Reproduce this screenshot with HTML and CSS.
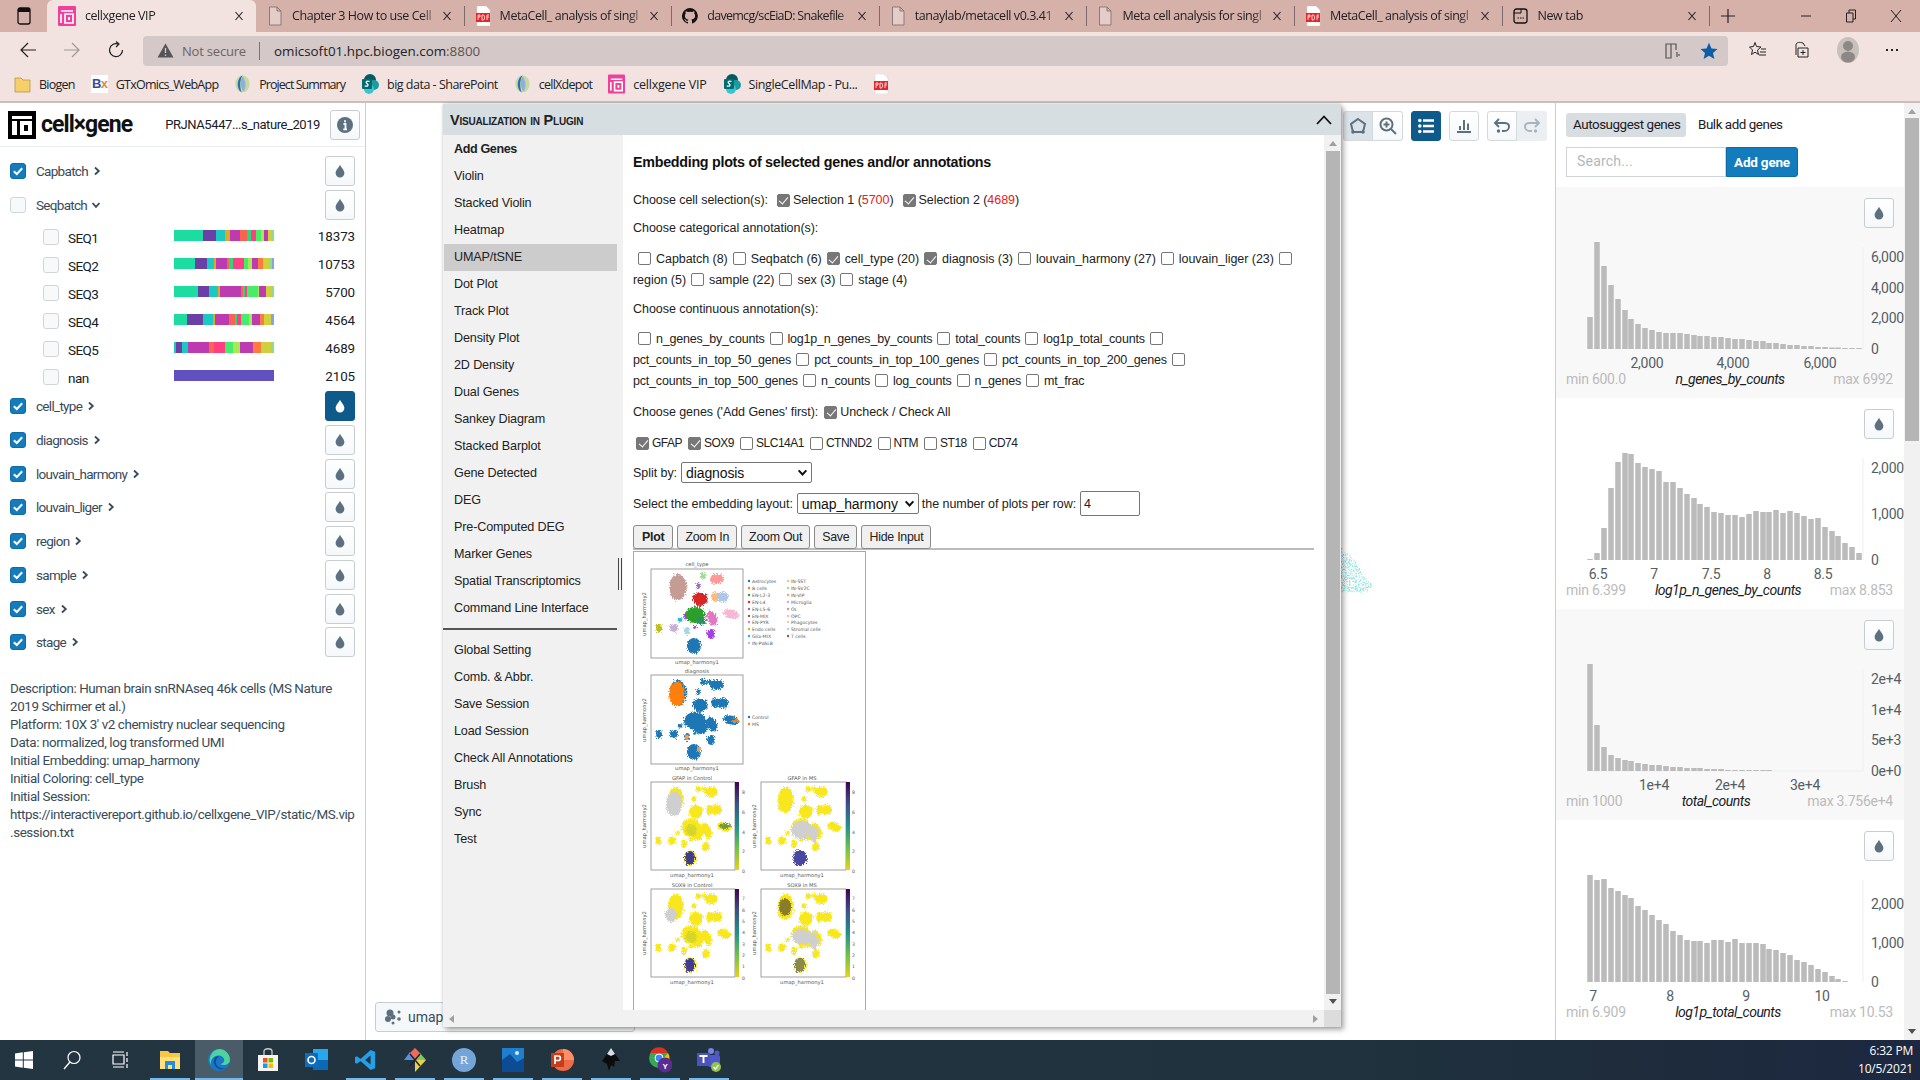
FILE: index.html
```html
<!DOCTYPE html>
<html lang="en">
<head>
<meta charset="utf-8">
<title>cellxgene VIP</title>
<link rel="stylesheet" href="styles.css">
</head>
<body>
<svg class="defs" width="0" height="0" aria-hidden="true">
  <defs>
    <symbol id="drop" viewBox="0 0 16 16"><path d="M8 .8C6.8 3.6 3 7 3 10.4A5 5 0 0 0 13 10.4C13 7 9.2 3.6 8 .8Z"/></symbol>
    <symbol id="chev" viewBox="0 0 10 10"><path d="M3 1.5 6.8 5 3 8.5" fill="none" stroke="currentColor" stroke-width="1.8"/></symbol>
    <symbol id="chevd" viewBox="0 0 10 10"><path d="M1.5 3 5 6.8 8.5 3" fill="none" stroke="currentColor" stroke-width="1.8"/></symbol>
    <symbol id="tick" viewBox="0 0 16 16"><path d="M3.8 8.2 6.8 11 12.2 5.2" fill="none" stroke="#fff" stroke-width="2"/></symbol>
    <symbol id="x" viewBox="0 0 10 10"><path d="M1.5 1 8.5 9M8.5 1 1.5 9" fill="none" stroke="#222" stroke-width="1.1"/></symbol>
    <symbol id="doc" viewBox="0 0 16 20"><path d="M2.5 1H10L14 5V19H2.5ZM10 1V5H14" fill="#e4cdc9" stroke="#8a7a78"/></symbol>
    <symbol id="pdf" viewBox="0 0 16 20"><path d="M2 0H11L15 4V20H2Z" fill="#fff" stroke="#ccc" stroke-width=".5"/><rect x="1" y="7" width="14" height="9" fill="#e8262a"/><path d="M3 14V9H5V11H3M7 14V9H8.500C10 10 10 13 8.500 14H7M12 14V9H14M12 11H14" fill="none" stroke="#fff" stroke-width=".8"/></symbol>
    <symbol id="vip" viewBox="0 0 18 20"><rect width="18" height="20" rx="1" fill="#f0409a"/><path d="M3 5H15M3 8V17M7 8H15V17H7Z" fill="none" stroke="#fff" stroke-width="1.700"/><rect x="10" y="11" width="2" height="3" fill="#fff"/></symbol>
    <symbol id="sp" viewBox="0 0 18 20"><circle cx="9" cy="6" r="6" fill="#045a60"/><circle cx="13" cy="11" r="5" fill="#1a9ba1"/><circle cx="8" cy="15" r="5" fill="#37c6d0"/><rect x="1" y="5" width="10" height="10" rx="1" fill="#036c70"/><path d="M8.500 7.500C6 6.500 4 8 6 9.500 8 11 7 12.800 3.800 12" fill="none" stroke="#fff" stroke-width="1.300"/></symbol>
    <symbol id="globe" viewBox="0 0 18 20"><ellipse cx="9" cy="10" rx="7.500" ry="9" fill="#c9d7a0"/><path d="M9 1C3 3 2 15 8 19 6 13 6 6 9 1Z" fill="#2a6fb5"/><path d="M9 2C6 7 7 14 10 18 13 14 13 6 9 2Z" fill="#8db0d8"/></symbol>
    <g id="um">
      <ellipse cx="27" cy="18" rx="8.500" ry="13"/><ellipse cx="24" cy="23" rx="5" ry="7"/>
      <ellipse cx="52" cy="7" rx="3" ry="3"/><ellipse cx="66" cy="10" rx="7" ry="5"/><ellipse cx="58" cy="7" rx="3" ry="2"/>
      <ellipse cx="47" cy="17" rx="2" ry="3"/>
      <ellipse cx="49" cy="30" rx="7.500" ry="7"/><ellipse cx="64" cy="28" rx="3.500" ry="5"/><ellipse cx="72" cy="28" rx="6" ry="5"/>
      <ellipse cx="44" cy="46" rx="11" ry="9"/><ellipse cx="50" cy="52" rx="7" ry="7"/><ellipse cx="61" cy="49" rx="5" ry="8" transform="rotate(-25 61 49)"/>
      <ellipse cx="80" cy="45" rx="8" ry="4.500" transform="rotate(15 80 45)"/>
      <ellipse cx="60" cy="65" rx="4" ry="5"/><ellipse cx="44" cy="58" rx="2" ry="2"/>
      <ellipse cx="43" cy="77" rx="7" ry="8"/><ellipse cx="36" cy="62" rx="3" ry="4"/>
      <ellipse cx="8" cy="59" rx="3" ry="4"/><ellipse cx="23" cy="59" rx="4" ry="4"/><ellipse cx="29" cy="51" rx="2.500" ry="2"/>
    </g>
    <filter id="soft" x="-15%" y="-15%" width="130%" height="130%"><feTurbulence type="fractalNoise" baseFrequency="1.1" numOctaves="2" seed="4" result="n"/><feDisplacementMap in="SourceGraphic" in2="n" scale="6" xChannelSelector="R" yChannelSelector="G"/><feGaussianBlur stdDeviation=".35"/></filter>
    <filter id="grain" x="-10%" y="-10%" width="120%" height="120%"><feTurbulence type="fractalNoise" baseFrequency=".9" numOctaves="2" seed="7" result="n"/><feDisplacementMap in="SourceGraphic" in2="n" scale="7" xChannelSelector="R" yChannelSelector="G"/></filter>
    <linearGradient id="vir" x1="0" y1="1" x2="0" y2="0"><stop offset="0" stop-color="#e8d21a"/><stop offset=".25" stop-color="#6cc34a"/><stop offset=".5" stop-color="#21908c"/><stop offset=".75" stop-color="#3b528b"/><stop offset="1" stop-color="#440154"/></linearGradient>
    <g id="genemap">
      <g transform="scale(.913 .99)"><use href="#um" fill="#f8e71c"/></g>
      <ellipse cx="39" cy="76" rx="5" ry="7" fill="#3f3a8c"/>
      <ellipse cx="40" cy="48" rx="6" ry="6" fill="#b8c93a" opacity=".55"/>
    </g>
  </defs>
</svg>

<div class="tabs">
  <div class="win-btn"><svg width="14" height="18" viewBox="0 0 14 18"><rect x="1" y="1" width="12" height="16" rx="2" fill="none" stroke="#111" stroke-width="1.300"/><rect x="1" y="1" width="12" height="4" fill="#111"/></svg></div>
  <div class="tab active"><svg class="fav" width="18" height="20"><use href="#vip"/></svg><span class="tab-t">cellxgene VIP</span><svg class="tab-x" width="10" height="10"><use href="#x"/></svg></div>
  <div class="tab"><svg class="fav" width="16" height="20"><use href="#doc"/></svg><span class="tab-t">Chapter 3 How to use Cell</span><svg class="tab-x" width="10" height="10"><use href="#x"/></svg></div>
  <div class="tab"><svg class="fav" width="16" height="20"><use href="#pdf"/></svg><span class="tab-t">MetaCell_ analysis of singl</span><svg class="tab-x" width="10" height="10"><use href="#x"/></svg></div>
  <div class="tab"><svg class="fav" width="16" height="18" viewBox="0 0 16 16"><path fill="#111" d="M8 0a8 8 0 0 0-2.500 15.600c.4.100.5-.2.500-.4v-1.400c-2.200.5-2.700-1-2.700-1-.4-.9-.9-1.200-.9-1.200-.7-.5.100-.5.100-.5.800.100 1.200.8 1.200.8.700 1.200 1.900.9 2.300.7.100-.5.300-.9.500-1.100-1.800-.2-3.600-.9-3.600-4 0-.9.300-1.600.8-2.100-.1-.2-.4-1 .1-2.100 0 0 .7-.2 2.200.8a7.600 7.600 0 0 1 4 0c1.500-1 2.200-.8 2.200-.8.400 1.100.2 1.900.1 2.100.5.600.8 1.300.8 2.100 0 3.100-1.900 3.700-3.700 3.900.3.300.6.800.6 1.500v2.200c0 .2.100.5.600.4A8 8 0 0 0 8 0Z"/></svg><span class="tab-t fit">davemcg/scEiaD: Snakefile</span><svg class="tab-x" width="10" height="10"><use href="#x"/></svg></div>
  <div class="tab"><svg class="fav" width="16" height="20"><use href="#doc"/></svg><span class="tab-t">tanaylab/metacell v0.3.41 |</span><svg class="tab-x" width="10" height="10"><use href="#x"/></svg></div>
  <div class="tab"><svg class="fav" width="16" height="20"><use href="#doc"/></svg><span class="tab-t">Meta cell analysis for singl</span><svg class="tab-x" width="10" height="10"><use href="#x"/></svg></div>
  <div class="tab"><svg class="fav" width="16" height="20"><use href="#pdf"/></svg><span class="tab-t">MetaCell_ analysis of singl</span><svg class="tab-x" width="10" height="10"><use href="#x"/></svg></div>
  <div class="tab"><svg class="fav" width="16" height="18" viewBox="0 0 16 18"><rect x="1" y="2" width="13" height="14" rx="2.500" fill="none" stroke="#111" stroke-width="1.300"/><path d="M1 6H8V2" fill="none" stroke="#111"/><path d="M4.500 11H11" stroke="#111" stroke-dasharray="1.500 1"/></svg><span class="tab-t">New tab</span><svg class="tab-x" width="10" height="10"><use href="#x"/></svg></div>
  <div class="tab-plus"><svg width="16" height="16"><path d="M8 1V15M1 8H15" stroke="#222" stroke-width="1.200"/></svg></div>
  <div class="win-ctl">
    <svg width="12" height="12"><path d="M1 6H11" stroke="#222"/></svg>
    <svg width="12" height="14"><path d="M1.500 4H8V13H1.500ZM4 4V1H10.500V10H8" fill="none" stroke="#222"/></svg>
    <svg width="12" height="14"><path d="M1 1 11 13M11 1 1 13" stroke="#222"/></svg>
  </div>
</div>

<div class="toolbar">
  <svg class="nav" width="18" height="18"><path d="M17 9H2M9 2 2 9 9 16" fill="none" stroke="#222" stroke-width="1.200"/></svg>
  <svg class="nav" width="18" height="18"><path d="M1 9H16M9 2 16 9 9 16" fill="none" stroke="#a09898" stroke-width="1.200"/></svg>
  <svg class="nav" width="18" height="18"><path d="M15.500 9A6.500 6.500 0 1 1 11 2.900M9 .5 12 3 9 6" fill="none" stroke="#222" stroke-width="1.200"/></svg>
  <div class="addr">
    <svg width="17" height="15" viewBox="0 0 17 15"><path d="M8.500 .5 16.500 14.500H.5Z" fill="#555"/><path d="M8.500 5V10M8.500 11.500V13" stroke="#d4c8c8" stroke-width="1.300"/></svg>
    <span class="notsec">Not secure</span><span class="addr-div"></span><span class="url">omicsoft01.hpc.biogen.com<span class="port">:8800</span></span>
    <span class="addr-right">
      <svg width="18" height="18"><path d="M2 2H7V16H2ZM7 2H12V8M13 10V15M15 12V14" fill="none" stroke="#555" stroke-width="1.200"/></svg>
      <svg width="18" height="18" viewBox="0 0 18 18"><path fill="#0b5ea8" d="M9 .8 11.500 6.500 17.500 7 13 11 14.400 17 9 13.800 3.600 17 5 11 .5 7 6.500 6.500Z"/></svg>
    </span>
  </div>
  <svg class="tool" width="18" height="18"><path d="M6 1.500 7.500 5.500 12 6 8.500 9 9.500 13.500 6 11.200 2.500 13.500 3.500 9 .5 6 4.500 5.500ZM12 8H17M11 11H17M10 14H17" fill="none" stroke="#222"/></svg>
  <svg class="tool" width="18" height="18"><path d="M4 14V4C4 1 8 1 11 2L13 5M6 7H16V16H6ZM11 9V14M8.500 11.500H13.500" fill="none" stroke="#222"/></svg>
  <svg class="tool" width="22" height="26" viewBox="0 0 22 26"><ellipse cx="11" cy="13" rx="11" ry="13" fill="#c9c0be"/><circle cx="11" cy="9" r="5" fill="#8d8886"/><ellipse cx="11" cy="20" rx="7" ry="5.500" fill="#8d8886"/></svg>
  <svg class="tool" width="18" height="18"><path d="M3 9H5M8 9H10M13 9H15" stroke="#222" stroke-width="2"/></svg>
</div>

<div class="bookmarks">
  <span class="bm"><svg width="17" height="18"><path d="M1 3H7L9 5H16V17H1Z" fill="#f7cf6a" stroke="#b08a30" stroke-width=".7"/></svg>Biogen</span>
  <span class="bm"><svg width="17" height="18" viewBox="0 0 17 18"><rect width="17" height="18" fill="#fff"/><text class="bx" x="1" y="13"><tspan fill="#3a4aa0">B</tspan><tspan fill="#e8863a">x</tspan></text></svg>GTxOmics_WebApp</span>
  <span class="bm b-ps"><svg width="17" height="20"><use href="#globe"/></svg>Project Summary</span>
  <span class="bm b-bd"><svg width="18" height="20"><use href="#sp"/></svg>big data - SharePoint</span>
  <span class="bm"><svg width="17" height="20"><use href="#globe"/></svg>cellXdepot</span>
  <span class="bm b-cv"><svg width="17" height="20"><use href="#vip"/></svg>cellxgene VIP</span>
  <span class="bm b-sc"><svg width="18" height="20"><use href="#sp"/></svg>SingleCellMap - Pu...</span>
  <span class="bm"><svg width="16" height="20"><use href="#pdf"/></svg></span>
</div>

<main class="app">
  <aside class="side">
    <header class="side-head">
      <svg class="logo" width="28" height="28" viewBox="0 0 28 28"><rect width="28" height="28"/><path d="M4 5H24V8H4ZM4 10H9V24H4ZM12 10H24V24H12Z" fill="#fff"/><rect x="16" y="14" width="4" height="6"/></svg>
      <span class="brand">cell×gene</span>
      <span class="dsname">PRJNA5447...s_nature_2019</span>
      <button class="ibtn info"><svg width="16" height="16" viewBox="0 0 16 16"><circle cx="8" cy="8" r="8" fill="#5c7080"/><path d="M8 3.200V5.200M6.500 7H8.500V12M6.300 12.300H10" stroke="#fff" stroke-width="1.800" fill="none"/></svg></button>
    </header>
    <div class="cats">
      <div class="cat"><span class="cb on"><svg width="16" height="16"><use href="#tick"/></svg></span><span class="cat-n">Capbatch</span><svg class="chev" width="10" height="10"><use href="#chev"/></svg><button class="ibtn"><svg class="dropi" width="14" height="14"><use href="#drop"/></svg></button></div>
      <div class="cat"><span class="cb"></span><span class="cat-n">Seqbatch</span><svg class="chev" width="10" height="10"><use href="#chevd"/></svg><button class="ibtn"><svg class="dropi" width="14" height="14"><use href="#drop"/></svg></button></div>
      <ul class="vals">
        <li class="val"><span class="cb"></span><span class="val-n">SEQ1</span><span class="bar"><i class="s1" style="width:29.300%"></i><i class="s2" style="width:12.700%"></i><i class="s3" style="width:9.300%"></i><i class="s4" style="width:4.700%"></i><i class="s5" style="width:10%"></i><i class="s6" style="width:6.700%"></i><i class="s7" style="width:4.300%"></i><i class="s8" style="width:5%"></i><i class="s9" style="width:5%"></i><i class="s10" style="width:3%"></i><i class="s5" style="width:4.300%"></i><i class="s11" style="width:2.700%"></i><i class="s12" style="width:3%"></i></span><span class="val-c">18373</span></li>
        <li class="val"><span class="cb"></span><span class="val-n">SEQ2</span><span class="bar"><i class="s1" style="width:21%"></i><i class="s2" style="width:11.700%"></i><i class="s3" style="width:7.300%"></i><i class="s4" style="width:2%"></i><i class="s5" style="width:11.300%"></i><i class="s6" style="width:1.700%"></i><i class="s7" style="width:4.300%"></i><i class="s8" style="width:10.300%"></i><i class="s9" style="width:4.300%"></i><i class="s10" style="width:3.700%"></i><i class="s5" style="width:6.700%"></i><i class="s13" style="width:5%"></i><i class="s11" style="width:6%"></i><i class="s12" style="width:2.300%"></i><i class="s14" style="width:2.300%"></i></span><span class="val-c">10753</span></li>
        <li class="val"><span class="cb"></span><span class="val-n">SEQ3</span><span class="bar"><i class="s1" style="width:24.300%"></i><i class="s2" style="width:10.700%"></i><i class="s3" style="width:9.300%"></i><i class="s4" style="width:1.300%"></i><i class="s5" style="width:21.300%"></i><i class="s6" style="width:2.300%"></i><i class="s7" style="width:1.700%"></i><i class="s8" style="width:2%"></i><i class="s9" style="width:11.300%"></i><i class="s10" style="width:1.300%"></i><i class="s5" style="width:6.300%"></i><i class="s11" style="width:5%"></i><i class="s12" style="width:3%"></i></span><span class="val-c">5700</span></li>
        <li class="val"><span class="cb"></span><span class="val-n">SEQ4</span><span class="bar"><i class="s1" style="width:12.700%"></i><i class="s2" style="width:16.700%"></i><i class="s3" style="width:10%"></i><i class="s4" style="width:1.300%"></i><i class="s5" style="width:14.700%"></i><i class="s6" style="width:5.700%"></i><i class="s7" style="width:2.300%"></i><i class="s8" style="width:4%"></i><i class="s9" style="width:7.300%"></i><i class="s10" style="width:3%"></i><i class="s5" style="width:8.300%"></i><i class="s13" style="width:4%"></i><i class="s11" style="width:6.700%"></i><i class="s14" style="width:3.300%"></i></span><span class="val-c">4564</span></li>
        <li class="val"><span class="cb"></span><span class="val-n">SEQ5</span><span class="bar"><i class="s3" style="width:2%"></i><i class="s2" style="width:6.300%"></i><i class="s3" style="width:5.300%"></i><i class="s5" style="width:21.300%"></i><i class="s6" style="width:4.700%"></i><i class="s8" style="width:11.700%"></i><i class="s9" style="width:8%"></i><i class="s10" style="width:6.700%"></i><i class="s5" style="width:13.300%"></i><i class="s13" style="width:7.700%"></i><i class="s11" style="width:9.700%"></i><i class="s12" style="width:3.300%"></i></span><span class="val-c">4689</span></li>
        <li class="val"><span class="cb"></span><span class="val-n">nan</span><span class="bar"><i class="s15" style="width:100%"></i></span><span class="val-c">2105</span></li>
      </ul>
      <div class="cat"><span class="cb on"><svg width="16" height="16"><use href="#tick"/></svg></span><span class="cat-n">cell_type</span><svg class="chev" width="10" height="10"><use href="#chev"/></svg><button class="ibtn sel"><svg class="dropi" width="14" height="14"><use href="#drop"/></svg></button></div>
      <div class="cat"><span class="cb on"><svg width="16" height="16"><use href="#tick"/></svg></span><span class="cat-n">diagnosis</span><svg class="chev" width="10" height="10"><use href="#chev"/></svg><button class="ibtn"><svg class="dropi" width="14" height="14"><use href="#drop"/></svg></button></div>
      <div class="cat"><span class="cb on"><svg width="16" height="16"><use href="#tick"/></svg></span><span class="cat-n">louvain_harmony</span><svg class="chev" width="10" height="10"><use href="#chev"/></svg><button class="ibtn"><svg class="dropi" width="14" height="14"><use href="#drop"/></svg></button></div>
      <div class="cat"><span class="cb on"><svg width="16" height="16"><use href="#tick"/></svg></span><span class="cat-n">louvain_liger</span><svg class="chev" width="10" height="10"><use href="#chev"/></svg><button class="ibtn"><svg class="dropi" width="14" height="14"><use href="#drop"/></svg></button></div>
      <div class="cat"><span class="cb on"><svg width="16" height="16"><use href="#tick"/></svg></span><span class="cat-n">region</span><svg class="chev" width="10" height="10"><use href="#chev"/></svg><button class="ibtn"><svg class="dropi" width="14" height="14"><use href="#drop"/></svg></button></div>
      <div class="cat"><span class="cb on"><svg width="16" height="16"><use href="#tick"/></svg></span><span class="cat-n">sample</span><svg class="chev" width="10" height="10"><use href="#chev"/></svg><button class="ibtn"><svg class="dropi" width="14" height="14"><use href="#drop"/></svg></button></div>
      <div class="cat"><span class="cb on"><svg width="16" height="16"><use href="#tick"/></svg></span><span class="cat-n">sex</span><svg class="chev" width="10" height="10"><use href="#chev"/></svg><button class="ibtn"><svg class="dropi" width="14" height="14"><use href="#drop"/></svg></button></div>
      <div class="cat"><span class="cb on"><svg width="16" height="16"><use href="#tick"/></svg></span><span class="cat-n">stage</span><svg class="chev" width="10" height="10"><use href="#chev"/></svg><button class="ibtn"><svg class="dropi" width="14" height="14"><use href="#drop"/></svg></button></div>
    </div>
    <p class="desc">Description: Human brain snRNAseq 46k cells (MS Nature<br>2019 Schirmer et al.)<br>Platform: 10X 3' v2 chemistry nuclear sequencing<br>Data: normalized, log transformed UMI<br>Initial Embedding: umap_harmony<br>Initial Coloring: cell_type<br>Initial Session:<br>https://interactivereport.github.io/cellxgene_VIP/static/MS.vip<br>.session.txt</p>
  </aside>

  <section class="canvas">
    <div class="tools">
      <div class="grp"><button class="tb act"><svg width="18" height="18" viewBox="0 0 18 18"><path d="M9 2 16 7 14 15H4L2 7Z" fill="none" stroke="#5c7080" stroke-width="2"/><circle cx="4" cy="15" r="1.800" fill="#5c7080"/><circle cx="14" cy="15" r="1.800" fill="#5c7080"/></svg></button><button class="tb"><svg width="18" height="18" viewBox="0 0 18 18"><circle cx="7.500" cy="7.500" r="6" fill="none" stroke="#5c7080" stroke-width="2"/><path d="M12 12 17 17M7.500 4.500V10.500M4.500 7.500H10.500" stroke="#5c7080" stroke-width="2"/></svg></button></div>
      <button class="tb sel"><svg width="16" height="16" viewBox="0 0 16 16"><path d="M5 2.500H16M5 8H16M5 13.500H16" stroke="#fff" stroke-width="2.600"/><circle cx="1.800" cy="2.500" r="1.800" fill="#fff"/><circle cx="1.800" cy="8" r="1.800" fill="#fff"/><circle cx="1.800" cy="13.500" r="1.800" fill="#fff"/></svg></button>
      <button class="tb solo"><svg width="16" height="16" viewBox="0 0 16 16"><path d="M1 14H15M4 8V12M8 2V12M12 5.500V12" stroke="#5c7080" stroke-width="2"/></svg></button>
      <div class="grp"><button class="tb"><svg width="18" height="18" viewBox="0 0 18 18"><path d="M6 2 2 6 6 10M2 6H12C18 6 17 14 11 14H9" fill="none" stroke="#5c7080" stroke-width="1.900"/><circle cx="5.500" cy="14" r="1.700" fill="#5c7080"/></svg></button><button class="tb off"><svg width="18" height="18" viewBox="0 0 18 18"><path d="M12 2 16 6 12 10M16 6H6C0 6 1 14 7 14H9" fill="none" stroke="#a7b3bd" stroke-width="1.900"/><circle cx="12.500" cy="14" r="1.700" fill="#a7b3bd"/></svg></button></div>
    </div>
    <svg class="dots" width="40" height="52" viewBox="0 0 40 52"><defs><pattern id="speck" width="3" height="3" patternUnits="userSpaceOnUse"><rect width="1.600" height="1.600" fill="#8fe3dc"/><rect x="1.500" y="1.500" width="1" height="1" fill="#b7efea"/></pattern></defs><path d="M0 2 14 14 25 32 33 40 28 46 14 48H0Z" fill="url(#speck)" filter="url(#grain)"/></svg>
    <button class="umap-tag"><svg width="18" height="18" viewBox="0 0 18 18"><g fill="#5c7080"><circle cx="6" cy="5" r="3.500"/><circle cx="4" cy="11" r="3"/><circle cx="9" cy="9" r="2.500"/><circle cx="15" cy="4" r="1.500"/><circle cx="15" cy="11" r="1.800"/><circle cx="9" cy="15" r="1.500"/></g></svg><span>umap_harmony</span></button>

    <div class="plugin">
      <header class="pl-head"><span class="pl-title">Visualization in Plugin</span><svg width="16" height="10" viewBox="0 0 16 10"><path d="M1 9 8 1.500 15 9" fill="none" stroke="#111" stroke-width="1.800"/></svg></header>
      <div class="pl-body">
        <nav class="pl-menu">
          <a class="mi strong">Add Genes</a><a class="mi">Violin</a><a class="mi">Stacked Violin</a><a class="mi">Heatmap</a><a class="mi cur">UMAP/tSNE</a><a class="mi">Dot Plot</a><a class="mi">Track Plot</a><a class="mi">Density Plot</a><a class="mi">2D Density</a><a class="mi">Dual Genes</a><a class="mi">Sankey Diagram</a><a class="mi">Stacked Barplot</a><a class="mi">Gene Detected</a><a class="mi">DEG</a><a class="mi">Pre-Computed DEG</a><a class="mi">Marker Genes</a><a class="mi">Spatial Transcriptomics</a><a class="mi">Command Line Interface</a>
          <hr class="mi-div">
          <a class="mi">Global Setting</a><a class="mi">Comb. &amp; Abbr.</a><a class="mi">Save Session</a><a class="mi">Load Session</a><a class="mi">Check All Annotations</a><a class="mi">Brush</a><a class="mi">Sync</a><a class="mi">Test</a>
        </nav>
        <div class="pl-split"><span class="grip"></span></div>
        <div class="pl-content">
          <h2 class="pl-h">Embedding plots of selected genes and/or annotations</h2>
          <div class="ln l1">Choose cell selection(s):<span class="ck on first"></span>Selection 1 (<span class="red">5700</span>)<span class="ck on sp"></span>Selection 2 (<span class="red">4689</span>)</div>
          <div class="ln l2">Choose categorical annotation(s):</div>
          <div class="ln l3"><span class="ck"></span><b>Capbatch (8)</b><span class="ck"></span><b>Seqbatch (6)</b><span class="ck on"></span><b>cell_type (20)</b><span class="ck on"></span><b>diagnosis (3)</b><span class="ck"></span><b>louvain_harmony (27)</b><span class="ck"></span><b>louvain_liger (23)</b><span class="ck"></span></div>
          <div class="ln l4">region (5)<span class="ck"></span><b>sample (22)</b><span class="ck"></span><b>sex (3)</b><span class="ck"></span><b>stage (4)</b></div>
          <div class="ln l5">Choose continuous annotation(s):</div>
          <div class="ln l3 tight"><span class="ck"></span><b>n_genes_by_counts</b><span class="ck"></span><b>log1p_n_genes_by_counts</b><span class="ck"></span><b>total_counts</b><span class="ck"></span><b>log1p_total_counts</b><span class="ck"></span></div>
          <div class="ln l4 tight">pct_counts_in_top_50_genes<span class="ck"></span><b>pct_counts_in_top_100_genes</b><span class="ck"></span><b>pct_counts_in_top_200_genes</b><span class="ck"></span></div>
          <div class="ln l4 tight">pct_counts_in_top_500_genes<span class="ck"></span><b>n_counts</b><span class="ck"></span><b>log_counts</b><span class="ck"></span><b>n_genes</b><span class="ck"></span><b>mt_frac</b></div>
          <div class="ln l6">Choose genes ('Add Genes' first):<span class="ck on"></span>Uncheck / Check All</div>
          <div class="ln l7"><span class="ck on"></span>GFAP<span class="ck on"></span>SOX9<span class="ck"></span>SLC14A1<span class="ck"></span>CTNND2<span class="ck"></span>NTM<span class="ck"></span>ST18<span class="ck"></span>CD74</div>
          <div class="ln l8">Split by:<span class="sel-box w1">diagnosis<svg width="11" height="11"><use href="#chevd"/></svg></span></div>
          <div class="ln l9">Select the embedding layout:<span class="sel-box w2">umap_harmony<svg width="11" height="11"><use href="#chevd"/></svg></span>the number of plots per row:<span class="num">4</span></div>
          <div class="btns"><button class="pb strong">Plot</button><button class="pb">Zoom In</button><button class="pb">Zoom Out</button><button class="pb">Save</button><button class="pb">Hide Input</button></div>
          <div class="plotwrap">
            <svg class="plot" width="232" height="458" viewBox="0 0 232 458">
              <g transform="translate(17 17)">
                <rect width="92" height="89" fill="#fff" stroke="#888" stroke-width=".8"/>
                <g filter="url(#soft)">
                  <g fill="#c49c94"><ellipse cx="27" cy="18" rx="8.500" ry="13"/><ellipse cx="24" cy="23" rx="5" ry="7"/></g>
                  <ellipse cx="52" cy="7" rx="3" ry="3" fill="#98df8a"/><ellipse cx="66" cy="10" rx="7" ry="5" fill="#ff9896"/>
                  <ellipse cx="47" cy="17" rx="2" ry="3" fill="#9467bd"/><ellipse cx="49" cy="30" rx="7.500" ry="7" fill="#d62728"/>
                  <ellipse cx="64" cy="28" rx="3.500" ry="5" fill="#ffbb78"/><ellipse cx="72" cy="28" rx="6" ry="5" fill="#aec7e8"/>
                  <ellipse cx="39" cy="47" rx="6" ry="5" fill="#a43ce8"/><ellipse cx="61" cy="49" rx="5" ry="8" transform="rotate(-25 61 49)" fill="#e377c2"/>
                  <ellipse cx="44" cy="46" rx="10" ry="8" fill="#2ca02c"/><ellipse cx="50" cy="52" rx="5" ry="4" fill="#2f8f60"/>
                  <ellipse cx="80" cy="45" rx="8" ry="4.500" transform="rotate(15 80 45)" fill="#f7b6d2"/><ellipse cx="60" cy="65" rx="4" ry="5" fill="#a43ce8"/>
                  <ellipse cx="44" cy="58" rx="2" ry="2" fill="#a43ce8"/><ellipse cx="43" cy="77" rx="7" ry="8" fill="#1f77b4"/>
                  <ellipse cx="36" cy="62" rx="3" ry="4" fill="#9edae5"/><ellipse cx="8" cy="59" rx="3" ry="4" fill="#bcbd22"/>
                  <ellipse cx="23" cy="59" rx="4" ry="4" fill="#c5b0d5"/><ellipse cx="29" cy="51" rx="2.500" ry="2" fill="#17becf"/>
                </g>
              </g>
              <g transform="translate(17 123)">
                <rect width="92" height="89" fill="#fff" stroke="#888" stroke-width=".8"/>
                <g filter="url(#soft)">
                  <use href="#um" fill="#1f77b4"/>
                  <ellipse cx="26" cy="19" rx="8" ry="12" fill="#ff7f0e"/><ellipse cx="84" cy="46" rx="3" ry="2" fill="#ff7f0e"/><ellipse cx="36" cy="62" rx="2" ry="3" fill="#ff9f4a"/><ellipse cx="48" cy="75" rx="2" ry="3" fill="#ff9f4a"/>
                </g>
              </g>
              <g transform="translate(17 230)"><rect width="84" height="88" fill="#fff" stroke="#888" stroke-width=".8"/><g filter="url(#soft)"><use href="#genemap"/><ellipse cx="23" cy="22" rx="8" ry="12" fill="#cfcfcf"/><ellipse cx="74" cy="44" rx="6" ry="3" fill="#6e9a3e"/></g><rect x="84" width="4" height="88" fill="url(#vir)"/></g>
              <g transform="translate(127 230)"><rect width="85" height="88" fill="#fff" stroke="#888" stroke-width=".8"/><g filter="url(#soft)"><use href="#genemap"/><ellipse cx="41" cy="48" rx="11" ry="9" fill="#cfcfcf"/><ellipse cx="53" cy="52" rx="4" ry="8" fill="#cfcfcf"/><ellipse cx="39" cy="76" rx="7" ry="8" fill="#4a46a0"/></g><rect x="85" width="4" height="88" fill="url(#vir)"/></g>
              <g transform="translate(17 337)"><rect width="84" height="88" fill="#fff" stroke="#888" stroke-width=".8"/><g filter="url(#soft)"><use href="#genemap"/><ellipse cx="20" cy="26" rx="6" ry="7" fill="#cfcfcf"/></g><rect x="84" width="4" height="88" fill="url(#vir)"/></g>
              <g transform="translate(127 337)"><rect width="85" height="88" fill="#fff" stroke="#888" stroke-width=".8"/><g filter="url(#soft)"><use href="#genemap"/><ellipse cx="41" cy="48" rx="10" ry="8" fill="#cfcfcf"/><ellipse cx="53" cy="52" rx="4" ry="8" fill="#cfcfcf"/><ellipse cx="24" cy="18" rx="6" ry="9" fill="#8a7d2a"/><ellipse cx="39" cy="76" rx="5" ry="7" fill="#8a8a50"/></g><rect x="85" width="4" height="88" fill="url(#vir)"/></g>
              <g class="ptxt">
                <text x="63" y="14" text-anchor="middle">cell_type</text><text x="63" y="112" text-anchor="middle">umap_harmony1</text>
                <text x="63" y="121" text-anchor="middle">diagnosis</text><text x="63" y="218" text-anchor="middle">umap_harmony1</text>
                <text x="58" y="228" text-anchor="middle">GFAP in Control</text><text x="58" y="325" text-anchor="middle">umap_harmony1</text>
                <text x="168" y="228" text-anchor="middle">GFAP in MS</text><text x="168" y="325" text-anchor="middle">umap_harmony1</text>
                <text x="58" y="335" text-anchor="middle">SOX9 in Control</text><text x="58" y="432" text-anchor="middle">umap_harmony1</text>
                <text x="168" y="335" text-anchor="middle">SOX9 in MS</text><text x="168" y="432" text-anchor="middle">umap_harmony1</text>
                <text transform="translate(12 62) rotate(-90)" text-anchor="middle">umap_harmony2</text>
                <text transform="translate(12 168) rotate(-90)" text-anchor="middle">umap_harmony2</text>
                <text transform="translate(12 274) rotate(-90)" text-anchor="middle">umap_harmony2</text>
                <text transform="translate(122 274) rotate(-90)" text-anchor="middle">umap_harmony2</text>
                <text transform="translate(12 381) rotate(-90)" text-anchor="middle">umap_harmony2</text>
                <text transform="translate(122 381) rotate(-90)" text-anchor="middle">umap_harmony2</text>
              </g>
              <g class="ptxt leg">
                <circle cx="115" cy="29" r="1.200" fill="#1f77b4"/><text x="118" y="31">Astrocytes</text>
                <circle cx="115" cy="36" r="1.200" fill="#ff7f0e"/><text x="118" y="38">B cells</text>
                <circle cx="115" cy="43" r="1.200" fill="#2ca02c"/><text x="118" y="45">EN-L2-3</text>
                <circle cx="115" cy="50" r="1.200" fill="#d62728"/><text x="118" y="52">EN-L4</text>
                <circle cx="115" cy="57" r="1.200" fill="#9467bd"/><text x="118" y="59">EN-L5-6</text>
                <circle cx="115" cy="64" r="1.200" fill="#8c564b"/><text x="118" y="66">EN-MIX</text>
                <circle cx="115" cy="70" r="1.200" fill="#e377c2"/><text x="118" y="72">EN-PYR</text>
                <circle cx="115" cy="77" r="1.200" fill="#bcbd22"/><text x="118" y="79">Endo cells</text>
                <circle cx="115" cy="84" r="1.200" fill="#17becf"/><text x="118" y="86">Glia-MIX</text>
                <circle cx="115" cy="91" r="1.200" fill="#aec7e8"/><text x="118" y="93">IN-PVALB</text>
                <circle cx="154" cy="29" r="1.200" fill="#ffbb78"/><text x="157" y="31">IN-SST</text>
                <circle cx="154" cy="36" r="1.200" fill="#98df8a"/><text x="157" y="38">IN-SV2C</text>
                <circle cx="154" cy="43" r="1.200" fill="#ff9896"/><text x="157" y="45">IN-VIP</text>
                <circle cx="154" cy="50" r="1.200" fill="#c5b0d5"/><text x="157" y="52">Microglia</text>
                <circle cx="154" cy="57" r="1.200" fill="#c49c94"/><text x="157" y="59">OL</text>
                <circle cx="154" cy="64" r="1.200" fill="#f7b6d2"/><text x="157" y="66">OPC</text>
                <circle cx="154" cy="70" r="1.200" fill="#dbdb8d"/><text x="157" y="72">Phagocytes</text>
                <circle cx="154" cy="77" r="1.200" fill="#9edae5"/><text x="157" y="79">Stromal cells</text>
                <circle cx="154" cy="84" r="1.200" fill="#ad494a"/><text x="157" y="86">T cells</text>
                <circle cx="115" cy="165" r="1.200" fill="#1f77b4"/><text x="118" y="167">Control</text>
                <circle cx="115" cy="172" r="1.200" fill="#ff7f0e"/><text x="118" y="174">MS</text>
                <text x="108" y="242">8</text><text x="108" y="262">6</text><text x="108" y="282">4</text><text x="108" y="301">2</text><text x="108" y="321">0</text>
                <text x="218" y="242">8</text><text x="218" y="262">6</text><text x="218" y="282">4</text><text x="218" y="301">2</text><text x="218" y="321">0</text>
                <text x="108" y="348">7</text><text x="108" y="360">6</text><text x="108" y="371">5</text><text x="108" y="382">4</text><text x="108" y="394">3</text><text x="108" y="405">2</text><text x="108" y="416">1</text><text x="108" y="428">0</text>
                <text x="218" y="348">7</text><text x="218" y="360">6</text><text x="218" y="371">5</text><text x="218" y="382">4</text><text x="218" y="394">3</text><text x="218" y="405">2</text><text x="218" y="416">1</text><text x="218" y="428">0</text>
              </g>
            </svg>
          </div>
        </div>
        <div class="vscroll"><span class="arr up"></span><span class="thumb"></span><span class="arr dn"></span></div>
      </div>
      <footer class="hscroll"><span class="arr lf"></span><span class="arr rt"></span><span class="corner"></span></footer>
    </div>
  </section>

  <aside class="genes">
    <div class="g-tabs"><span class="g-tab on">Autosuggest genes</span><span class="g-tab">Bulk add genes</span></div>
    <div class="g-search"><span class="g-input">Search...</span><button class="g-add">Add gene</button></div>

    <article class="hist alt">
      <button class="ibtn hbtn"><svg class="dropi" width="14" height="14"><use href="#drop"/></svg></button>
      <svg class="chart" width="349" height="192" viewBox="0 0 349 192">
        <path class="axis" d="M307 60V162"/>
        <path class="bars" d="M34 162v-32M41 162v-107M48 162v-83M55 162v-64M62 162v-50M69 162v-39M75 162v-30M82 162v-25M89 162v-21M96 162v-19M103 162v-17M110 162v-16M117 162v-16M124 162v-16M131 162v-15M138 162v-14M144 162v-13M151 162v-13M158 162v-12M165 162v-12M172 162v-11M179 162v-10M186 162v-10M193 162v-9M200 162v-8M207 162v-8M213 162v-6M220 162v-6M227 162v-5M234 162v-4M241 162v-4M248 162v-3M255 162v-3M262 162v-2M269 162v-2M276 162v-1.500M282 162v-1.500M289 162v-1M296 162v-1M303 162v-1"/>
        <g class="tk"><text x="315" y="75">6,000</text><text x="315" y="106">4,000</text><text x="315" y="136">2,000</text><text x="315" y="167">0</text></g>
        <g class="tk mid"><text x="91" y="181">2,000</text><text x="177" y="181">4,000</text><text x="264" y="181">6,000</text></g>
      </svg>
      <div class="h-foot"><span class="mn">min 600.0</span><em class="nm1">n_genes_by_counts</em><span class="mx">max 6992</span></div>
    </article>

    <article class="hist">
      <button class="ibtn hbtn"><svg class="dropi" width="14" height="14"><use href="#drop"/></svg></button>
      <svg class="chart" width="349" height="192" viewBox="0 0 349 192">
        <path class="axis" d="M307 60V162"/>
        <path class="bars" d="M34 162v-1M41 162v-7M48 162v-32M55 162v-72M62 162v-98M69 162v-107M75 162v-106M82 162v-97M89 162v-93M96 162v-91M103 162v-89M110 162v-78M117 162v-78M124 162v-72M131 162v-66M138 162v-62M144 162v-56M151 162v-53M158 162v-48M165 162v-47M172 162v-45M179 162v-45M186 162v-43M193 162v-46M200 162v-49M207 162v-48M213 162v-48M220 162v-50M227 162v-47M234 162v-49M241 162v-47M248 162v-44M255 162v-41M262 162v-42M269 162v-33M276 162v-29M282 162v-24M289 162v-17M296 162v-13M303 162v-7"/>
        <g class="tk"><text x="315" y="75">2,000</text><text x="315" y="121">1,000</text><text x="315" y="167">0</text></g>
        <g class="tk mid"><text x="42" y="181">6.5</text><text x="98" y="181">7</text><text x="155" y="181">7.5</text><text x="211" y="181">8</text><text x="267" y="181">8.5</text></g>
      </svg>
      <div class="h-foot"><span class="mn">min 6.399</span><em class="nm2">log1p_n_genes_by_counts</em><span class="mx">max 8.853</span></div>
    </article>

    <article class="hist alt">
      <button class="ibtn hbtn"><svg class="dropi" width="14" height="14"><use href="#drop"/></svg></button>
      <svg class="chart" width="349" height="192" viewBox="0 0 349 192">
        <path class="axis" d="M307 60V162M34 162H307"/>
        <path class="bars" d="M34 162v-107M41 162v-46M48 162v-24M55 162v-16M62 162v-13M69 162v-11M75 162v-10M82 162v-8M89 162v-7M96 162v-6M103 162v-6M110 162v-5M117 162v-4M124 162v-4M131 162v-3M138 162v-3M144 162v-3M151 162v-2M158 162v-2M165 162v-2M172 162v-1M179 162v-1M186 162v-1M193 162v-1M200 162v-1M207 162v-1M213 162v-1"/>
        <g class="tk"><text x="315" y="75">2e+4</text><text x="315" y="106">1e+4</text><text x="315" y="136">5e+3</text><text x="315" y="167">0e+0</text></g>
        <g class="tk mid"><text x="98" y="181">1e+4</text><text x="174" y="181">2e+4</text><text x="249" y="181">3e+4</text></g>
      </svg>
      <div class="h-foot"><span class="mn">min 1000</span><em class="nm3">total_counts</em><span class="mx">max 3.756e+4</span></div>
    </article>

    <article class="hist">
      <button class="ibtn hbtn"><svg class="dropi" width="14" height="14"><use href="#drop"/></svg></button>
      <svg class="chart" width="349" height="192" viewBox="0 0 349 192">
        <path class="axis" d="M307 60V162"/>
        <path class="bars" d="M34 162v-107M41 162v-102M48 162v-103M55 162v-94M62 162v-91M69 162v-87M75 162v-84M82 162v-76M89 162v-72M96 162v-67M103 162v-62M110 162v-58M117 162v-51M124 162v-47M131 162v-42M138 162v-41M144 162v-41M151 162v-39M158 162v-42M165 162v-42M172 162v-40M179 162v-43M186 162v-39M193 162v-39M200 162v-39M207 162v-38M213 162v-33M220 162v-32M227 162v-29M234 162v-27M241 162v-22M248 162v-20M255 162v-17M262 162v-13M269 162v-10M276 162v-6M282 162v-3M289 162v-1"/>
        <g class="tk"><text x="315" y="89">2,000</text><text x="315" y="128">1,000</text><text x="315" y="167">0</text></g>
        <g class="tk mid"><text x="37" y="181">7</text><text x="114" y="181">8</text><text x="190" y="181">9</text><text x="266" y="181">10</text></g>
      </svg>
      <div class="h-foot"><span class="mn">min 6.909</span><em class="nm4">log1p_total_counts</em><span class="mx">max 10.53</span></div>
    </article>
    <div class="g-scroll"><span class="arr up"></span><span class="g-thumb"></span><span class="arr dn"></span></div>
  </aside>
</main>

<footer class="taskbar">
  <span class="tk-i"><svg width="18" height="18" viewBox="0 0 18 18"><path fill="#fff" d="M0 2.500 7.800 1.300V8.600H0ZM8.800 1.200 18 0V8.600H8.800ZM0 9.600H7.800V16.800L0 15.600ZM8.800 9.600H18V18L8.800 16.800Z"/></svg></span>
  <span class="tk-i"><svg width="18" height="20" viewBox="0 0 18 20"><circle cx="11" cy="7.500" r="6" fill="none" stroke="#fff" stroke-width="1.200"/><path d="M7 12 1 19" stroke="#fff" stroke-width="1.300"/></svg></span>
  <span class="tk-i"><svg width="18" height="18" viewBox="0 0 18 18"><path d="M2 4H13V13H2ZM2 1H13M2 16H13M16 1V5M16 7V11M16 13V17" fill="none" stroke="#fff" stroke-width="1.200"/></svg></span>
  <span class="tk-i run first"><svg width="22" height="22" viewBox="0 0 22 22"><path d="M1 2H9L11 4H21V19H1Z" fill="#f6c644"/><rect x="1" y="8" width="20" height="12" fill="#ffe07a"/><rect x="6" y="12" width="10" height="8" fill="#2a8bd8"/><rect x="9" y="16" width="4" height="4" fill="#ffe07a"/></svg></span>
  <span class="tk-i run cur"><svg width="24" height="24" viewBox="0 0 24 24"><circle cx="12" cy="12" r="11" fill="#1b76c8"/><path d="M12 1A11 11 0 0 1 23 12C23 17 16 18 13 16 18 16 19 10 14 8 8 6 3 11 4 17 .5 11 4 2 12 1Z" fill="#4ed3a0"/><path d="M12 8C7 8 5 14 9 19 12 22 16 22 19 20 13 22 7 17 9 12 10 10 11 9 12 8Z" fill="#0c4c94"/></svg></span>
  <span class="tk-i run-no"><svg width="22" height="24" viewBox="0 0 22 24"><path d="M1 7H21V23H1Z" fill="#f6f4f2"/><path d="M7 7V3C7 0 15 0 15 3V7" fill="none" stroke="#ccc" stroke-width="1.300"/><rect x="6" y="10" width="4.500" height="4.500" fill="#f25022"/><rect x="11.500" y="10" width="4.500" height="4.500" fill="#7fba00"/><rect x="6" y="15.500" width="4.500" height="4.500" fill="#00a4ef"/><rect x="11.500" y="15.500" width="4.500" height="4.500" fill="#ffb900"/></svg></span>
  <span class="tk-i run-no"><svg width="24" height="24" viewBox="0 0 24 24"><rect x="8" y="1" width="15" height="14" fill="#28a8ea"/><path d="M8 12 23 12V22H8Z" fill="#0a6ab8"/><rect x="0" y="5" width="13" height="14" fill="#0f6cbd"/><circle cx="6.500" cy="12" r="3.500" fill="none" stroke="#fff" stroke-width="1.600"/></svg></span>
  <span class="tk-i run"><svg width="22" height="24" viewBox="0 0 24 24"><path d="M17 1 22 3V21L17 23 6 13 2 16 0 15V9L2 8 6 11ZM17 7 11 12 17 17Z" fill="#23a0e8"/></svg></span>
  <span class="tk-i run"><svg width="24" height="26" viewBox="0 0 24 26"><path d="M12 1 17 6 12 13 7 6Z" fill="#ef6a5a"/><path d="M12 13 23 13 12 25Z" fill="#e8d24a"/><path d="M12 13 1 13 7 5Z" fill="#5b8fe0"/><path d="M12 13 17 6 23 13Z" fill="#7bc86c"/><path d="M7 7 17 19M17 7 7 19" stroke="#222" stroke-width="1.400"/></svg></span>
  <span class="tk-i run"><span class="r-ic">R</span></span>
  <span class="tk-i run"><svg width="22" height="24" viewBox="0 0 22 24"><rect width="22" height="24" fill="#1e7fd0"/><path d="M0 24V12L8 6 15 14 22 10V24Z" fill="#0c4c94"/><circle cx="15" cy="5" r="2" fill="#d8ecff"/></svg></span>
  <span class="tk-i run"><svg width="24" height="24" viewBox="0 0 24 24"><circle cx="13" cy="12" r="11" fill="#ed6c47"/><path d="M13 1A11 11 0 0 1 24 12H13Z" fill="#ff8f6b"/><rect x="1" y="5" width="13" height="14" fill="#c43e1c"/><path d="M5 16V8H8.500C11 8 11 12.500 8.500 12.500H5" fill="none" stroke="#fff" stroke-width="1.700"/></svg></span>
  <span class="tk-i run"><svg width="20" height="26" viewBox="0 0 20 26"><path d="M10 1 19 14 14 14 13 20 10 18 8 24 6 17 1 14Z" fill="#0c0c0c"/><path d="M10 1 14 7 10 9 6 7Z" fill="#d8dce8"/></svg></span>
  <span class="tk-i run"><svg width="24" height="26" viewBox="0 0 24 26"><circle cx="11" cy="11" r="10" fill="#3aa757"/><path d="M2 6A10 10 0 0 1 20 6H11Z" fill="#d93025"/><path d="M20 6A10 10 0 0 1 11 21L15 12Z" fill="#fbbc04"/><circle cx="11" cy="11" r="4" fill="#4285f4" stroke="#fff"/><circle cx="17" cy="18" r="7.500" fill="#5c2d91"/><text class="yy" x="14.500" y="21.500">Y</text></svg></span>
  <span class="tk-i run"><svg width="26" height="26" viewBox="0 0 26 26"><circle cx="15" cy="4" r="3" fill="#7b83eb"/><circle cx="21" cy="6" r="2.500" fill="#5059c9"/><rect x="12" y="8" width="12" height="12" rx="2" fill="#5059c9"/><rect x="1" y="6" width="13" height="13" fill="#4b53bc"/><path d="M3.500 9H11.500M7.500 9V16" stroke="#fff" stroke-width="1.900"/><circle cx="20" cy="20" r="5" fill="#92c353"/><path d="M17.500 20 19.500 22 22.500 18" fill="none" stroke="#fff" stroke-width="1.200"/></svg></span>
  <span class="clock">6:32 PM<br>10/5/2021</span>
</footer>
</body>
</html>
```

FILE: styles.css
```css
*{box-sizing:border-box}
html,body{margin:0;height:100%}
body{width:1920px;height:1080px;overflow:hidden;background:#fff;font-family:Roboto,"Liberation Sans",sans-serif;color:#182026;display:flex;flex-direction:column}
.defs{position:absolute}
button{font-family:inherit;cursor:pointer}

/* browser chrome */
.tabs{height:32px;background:#d6b1aa;display:flex;align-items:stretch;flex:none;font-family:"Open Sans","Liberation Sans",sans-serif}
.win-btn{width:47px;display:flex;align-items:center;justify-content:center}
.tab{width:207.6px;display:flex;align-items:center;padding:0 12px 0 11px;position:relative;font-size:12.5px;letter-spacing:-.45px;color:#222}
.tab+.tab::before{content:"";position:absolute;left:0;top:6px;bottom:6px;width:1px;background:#7e6a66}
.tab.active{background:#f2e3e1;border-radius:6px 6px 0 0;width:209px}
.tab.active::before,.active+.tab::before{display:none}
.fav{flex:none;margin-right:9px}
.tab-t{flex:1;white-space:nowrap;overflow:hidden;-webkit-mask-image:linear-gradient(90deg,#000 90%,rgba(0,0,0,.25));mask-image:linear-gradient(90deg,#000 90%,rgba(0,0,0,.25));padding-bottom:1px}
.tab-t.fit{letter-spacing:-.7px}
.tab-x{flex:none;margin-left:6px}
.tab-plus{width:36px;border-left:1px solid #7e6a66;margin:6px 0;display:flex;align-items:center;justify-content:center}
.win-ctl{flex:1;display:flex;align-items:center;justify-content:flex-end;gap:33px;padding-right:18px}
.toolbar{height:35px;background:#f2e3e1;display:flex;align-items:center;flex:none;padding-left:19px;font-family:"Open Sans","Liberation Sans",sans-serif}
.nav{margin-right:26px}
.addr{width:1585px;margin-left:-8px;height:30px;border-radius:4px;background:#d4c8c8;display:flex;align-items:center;padding-left:14px;font-size:13px;letter-spacing:-.2px;position:relative;top:1px}
.notsec{margin-left:8px;color:#6b6464}
.addr-div{width:1px;height:18px;background:#777;margin:0 13px}
.url{color:#222;font-size:13.4px;letter-spacing:0;margin-left:1px}
.port{color:#555}
.addr-right{margin-left:auto;display:flex;gap:18px;padding-right:10px;align-items:center}
.tool{margin-left:21px}
.tool:nth-of-type(5){margin-left:25px}
.tool:nth-of-type(6){margin-left:27px}
.tool:nth-of-type(7){margin-left:24px}
.bookmarks{height:36px;background:#f2e3e1;border-bottom:2px solid #c9bfbd;display:flex;align-items:center;flex:none;padding-left:14px;gap:16px;font-family:"Open Sans","Liberation Sans",sans-serif;font-size:12.5px;letter-spacing:-.75px;color:#222}
.bm{display:flex;align-items:center;gap:8px}
.b-ps{letter-spacing:-.95px}
.b-bd{letter-spacing:-.5px}
.b-cv{letter-spacing:-.2px}
.b-sc{letter-spacing:-.4px}
.bx{font:bold 13px "Liberation Sans",sans-serif}

/* main app */
.app{flex:1;display:flex;min-height:0;height:937px;position:relative}
.side{width:366px;flex:none;border-right:1px solid #c5d0da;font-size:13.4px;letter-spacing:-.3px;color:#394b59}
.side-head{height:44px;border-bottom:1px solid #ebeef0;display:flex;align-items:center;padding-left:8px;position:relative}
.logo{fill:#000;flex:none}
.brand{font-weight:700;font-size:23px;letter-spacing:-.95px;color:#111;margin-left:5px;font-family:Roboto,sans-serif}
.dsname{margin-left:auto;color:#182026;font-size:13px;letter-spacing:-.42px;margin-right:10px}
.ibtn{width:30px;height:30px;border:1px solid #c8cdd2;border-radius:3px;background:linear-gradient(#fff,#f5f8fa);padding:0;display:flex;align-items:center;justify-content:center;flex:none}
.info{margin-right:5px}
.dropi{fill:#5c7080}
.ibtn.sel{background:#0e5a8a;border-color:#0e5a8a}
.ibtn.sel .dropi{fill:#fff}
.cats{padding:9px 10px 0}
.cat{display:flex;align-items:center;height:30px;margin-bottom:3.7px;font-size:13.5px;letter-spacing:-.7px}
.cb{width:16px;height:16px;border-radius:3px;border:1px solid #d0d5d9;background:#f8f9fa;flex:none;display:block}
.cb.on{background:#137cbd;border-color:#106ba3}
.cb svg{display:block;margin:-1px}
.cat-n{margin-left:10px;color:#394b59}
.chev{margin-left:4px;color:#394b59}
.cat .ibtn{margin-left:auto}
.vals{list-style:none;margin:3px 0 0;padding:0 0 0 33px}
.val{display:flex;align-items:center;height:28px;color:#182026}
.val-n{margin-left:9px;width:106px;font-size:13.5px;letter-spacing:-.55px;padding-top:2px}
.bar{display:flex;width:100px;height:11px;flex:none;margin-top:-4px}
.bar i{display:block;height:100%}
.val-c{margin-left:auto;font-size:13.4px;letter-spacing:-.1px;margin-top:-2px}
.s1{background:#1ddc9f}.s2{background:#6a3fa6}.s3{background:#1cc9c0}.s4{background:#e0a828}.s5{background:#bc3bb0}.s6{background:#fb6250}.s7{background:#2fd67f}.s8{background:#ff3f80}.s9{background:#46ec6a}.s10{background:#a5ea55}.s11{background:#cfd040}.s12{background:#8fdc8f}.s13{background:#ff7a3c}.s14{background:#8aa0e0}.s15{background:#6050c0}
.desc{margin:23px 4px 0 10px;line-height:18px;font-size:13.4px;letter-spacing:-.4px;color:#394b59;white-space:nowrap}

/* canvas */
.canvas{flex:1;position:relative;background:#fff}
.tools{position:absolute;top:8px;left:977px;display:flex;gap:8px}
.grp{display:flex}
.tb{width:30px;height:30px;border:1px solid #d4d9dd;background:linear-gradient(#fff,#f5f8fa);padding:0;display:flex;align-items:center;justify-content:center;border-radius:3px}
.grp .tb:first-child{border-radius:3px 0 0 3px}
.grp .tb:last-child{border-radius:0 3px 3px 0;border-left:0}
.tb.act{background:#dce3e8}
.tb.sel{background:#0e5a8a;border-color:#0e5a8a}
.tb.off{background:#ebeff2;border-color:#ebeff2}
.dots{position:absolute;left:974px;top:442px}
.umap-tag{position:absolute;left:9px;top:899px;width:260px;height:30px;border:1px solid #c8cdd2;border-radius:3px;background:#f5f8fa;display:flex;align-items:center;gap:6px;padding:0 8px;font-size:14px;color:#394b59}

/* plugin window */
.plugin{position:absolute;left:77px;top:1px;width:898px;height:923px;background:#f1f1f1;box-shadow:3px 3px 5px rgba(0,0,0,.3),0 0 3px rgba(0,0,0,.2);display:flex;flex-direction:column;font-family:"Liberation Sans",Arial,sans-serif}
.pl-head{height:31px;background:#d6dee2;display:flex;align-items:center;justify-content:space-between;padding:0 9px 0 7px;flex:none}
.pl-title{font-variant:small-caps;font-weight:700;font-size:14.5px;letter-spacing:-.2px;color:#222}
.pl-body{flex:1;display:flex;min-height:0}
.pl-menu{width:174px;flex:none;background:#f1f1f1;display:flex;flex-direction:column;padding:1px 0 0 1px}
.mi{height:27px;line-height:27px;padding-left:10px;font-size:12.6px;letter-spacing:-.15px;color:#222;flex:none}
.mi.strong{font-weight:700;letter-spacing:-.4px}
.mi.cur{background:#ccc}
.mi-div{border:0;border-top:2px solid #555;height:0;margin:6px 0 7px -1px;flex:none;width:174px}
.pl-split{width:6px;flex:none;position:relative}
.grip{position:absolute;left:1px;top:423px;width:4px;height:32px;border-left:1px solid #444;border-right:1px solid #444}
.pl-content{flex:1;background:#fff;padding:0 0 0 10px;min-width:0;font-size:12.5px;letter-spacing:-.05px;color:#222;overflow:hidden}
.pl-h{margin:17px 0 19px;font-size:14.3px;line-height:20px;letter-spacing:-.28px;font-weight:700;color:#111}
.ln{white-space:nowrap;display:flex;align-items:center}
.ln b{font-weight:400;margin:0}
.ln.l1{height:18px;margin-bottom:10px}
.ln.l2{height:18px;margin-bottom:11px}
.ln.l3{height:21px}
.ln.l3 .ck,.ln.l4 .ck{margin:0 5px 0 5px}
.ln.l4{height:21px}
.ln.tight{letter-spacing:-.2px}
.ln.l5{height:18px;margin:10px 0 10px}
.ln.l6{height:18px;margin:12px 0 13px}
.ln.l7{height:18px;margin-bottom:8px;gap:3px;font-size:12px;letter-spacing:-.5px}
.ln.l7 .ck{margin:0 0 0 3px}
.ln.l8{height:25px;margin-bottom:6px}
.ln.l9{height:25px;margin-bottom:9px}
.red{color:#e8201a}
.ck{width:13px;height:13px;border:1px solid #767676;border-radius:2px;background:#fff;display:inline-block;flex:none;position:relative;margin:0 3px 0 6px}
.ck.on{background:#777;border-color:#777}
.ck.on::after{content:"";position:absolute;left:3.500px;top:.5px;width:4px;height:8px;border:solid #fff;border-width:0 1.500px 1.500px 0;transform:rotate(40deg)}
.ck.first{margin-left:9px}
.ck.sp{margin-left:9px}
.sel-box{height:21px;border:1px solid #767676;border-radius:2px;display:inline-flex;align-items:center;justify-content:space-between;padding:0 3px 0 4px;font-size:14px;letter-spacing:-.1px;background:#fff;margin:0 3px 0 4px;color:#111}
.w1{width:131px}
.w2{width:122px}
.num{width:60px;height:25px;border:1px solid #767676;border-radius:2px;display:inline-flex;align-items:center;padding-left:3px;margin-left:4px}
.btns{display:flex;gap:4px;border-bottom:2px solid #bbb;height:25px;margin-right:10px}
.pb{height:24px;border:1px solid #8a8a8a;border-radius:3px;background:#f0f0f0;padding:0 7px;font-family:inherit;font-size:12.4px;letter-spacing:-.25px;color:#222}
.pb.strong{font-weight:700;padding:0 8px}
.plotwrap{width:233px;height:470px;border:1px solid #aaa;border-bottom:0;margin:1px 0 0}
.plot{display:block}
.ptxt text{font-size:5.200px;fill:#555;font-family:"DejaVu Sans",sans-serif;letter-spacing:0}
.ptxt.leg text{font-size:4.600px}
.vscroll{width:17px;flex:none;background:#f1f1f1;display:flex;flex-direction:column;align-items:center;position:relative}
.thumb{width:14px;height:843px;background:#b5b5b5;margin:1px 0 0}
.arr{display:block;width:0;height:0;border:4px solid transparent;flex:none}
.arr.up{border-bottom:5px solid #a0a0a0;border-top:0;margin-top:6px;margin-bottom:4px}
.arr.dn{border-top:5px solid #505050;border-bottom:0;margin-top:5px}
.hscroll{height:17px;flex:none;background:#f1f1f1;position:relative;display:flex;align-items:center;padding-left:6px}
.arr.lf{border-right:5px solid #a0a0a0;border-left:0}
.arr.rt{border-left:5px solid #a0a0a0;border-right:0;margin-left:auto;margin-right:6px}
.corner{width:17px;height:17px;background:#dcdcdc}

/* genes panel */
.genes{width:365px;flex:none;border-left:1px solid #c5d0da;padding-top:10px;position:relative;padding-right:16px;font-size:13.4px}
.g-tabs{display:flex;gap:5px;padding-left:10px}
.g-tab{height:24px;line-height:24px;padding:0 7px;border-radius:3px;color:#182026;font-size:13.4px;letter-spacing:-.45px;white-space:nowrap}
.g-tab.on{background:#d8dde1;width:120px}
.g-search{display:flex;margin:10px 0 10px 10px;height:30px}
.g-input{width:160px;border:1px solid #ced4d9;padding-left:10px;line-height:26px;color:#b0b8bf;font-size:14px;letter-spacing:.2px}
.g-add{width:72px;border:1px solid #106ba3;border-radius:0 3px 3px 0;background:#137cbd;color:#fff;font-weight:700;font-size:13.5px;letter-spacing:-.2px;padding:0}
.hist{height:211px;position:relative;width:349px;padding-top:0}
.hist.alt{background:#f8f8f8}
.hbtn{position:absolute;right:11px;top:11px}
.chart{display:block}
.axis{stroke:#eceff1;fill:none}
.bars{stroke:#bbb;stroke-width:5.5;fill:none}
.tk text{font-size:14px;letter-spacing:-.25px;fill:#555e66;font-family:Roboto,sans-serif}
.tk.mid text{text-anchor:middle}
.h-foot{position:absolute;left:10px;right:12px;top:184px;display:flex;justify-content:space-between;font-size:14px;letter-spacing:-.25px}
.mn,.mx{color:#bbb}
.h-foot em{color:#182026;position:absolute;top:0;transform:translateX(-50%);white-space:nowrap;letter-spacing:-.5px}
.nm1{left:164px}.nm2{left:162px}.nm3{left:150px}.nm4{left:162px}
.g-scroll{position:absolute;right:0;top:0;bottom:0;width:16px;background:#f1f1f1;display:flex;flex-direction:column;align-items:center}
.g-thumb{width:14px;height:323px;background:#b5b5b5}
.g-scroll .arr.dn{margin-top:auto;margin-bottom:6px}

/* taskbar */
.taskbar{height:40px;flex:none;background:linear-gradient(90deg,#233540,#20323e 70%,#1e2c3c 85%,#1c2841);display:flex;align-items:stretch;padding-left:0}
.tk-i{width:48px;display:flex;align-items:center;justify-content:center;position:relative;margin-right:1px}
.tk-i:nth-child(-n+3){margin-right:0}
.tk-i:nth-child(4){margin-left:2px}
.run::after{content:"";position:absolute;left:4px;right:4px;bottom:0;height:2px;background:#76b9ed}
.cur{background:#4a5c68}
.cur::after{left:0;right:0}
.r-ic{width:24px;height:24px;border-radius:50%;background:#75a5d8;color:#e8f0f8;font:13px "Liberation Serif",serif;display:flex;align-items:center;justify-content:center}
.yy{font:bold 8px "Liberation Sans",sans-serif;fill:#fff}
.clock{margin-left:auto;color:#fff;font:12px/18px "Open Sans","Liberation Sans",sans-serif;letter-spacing:-.2px;text-align:right;padding:2px 7px 0 0}
```
